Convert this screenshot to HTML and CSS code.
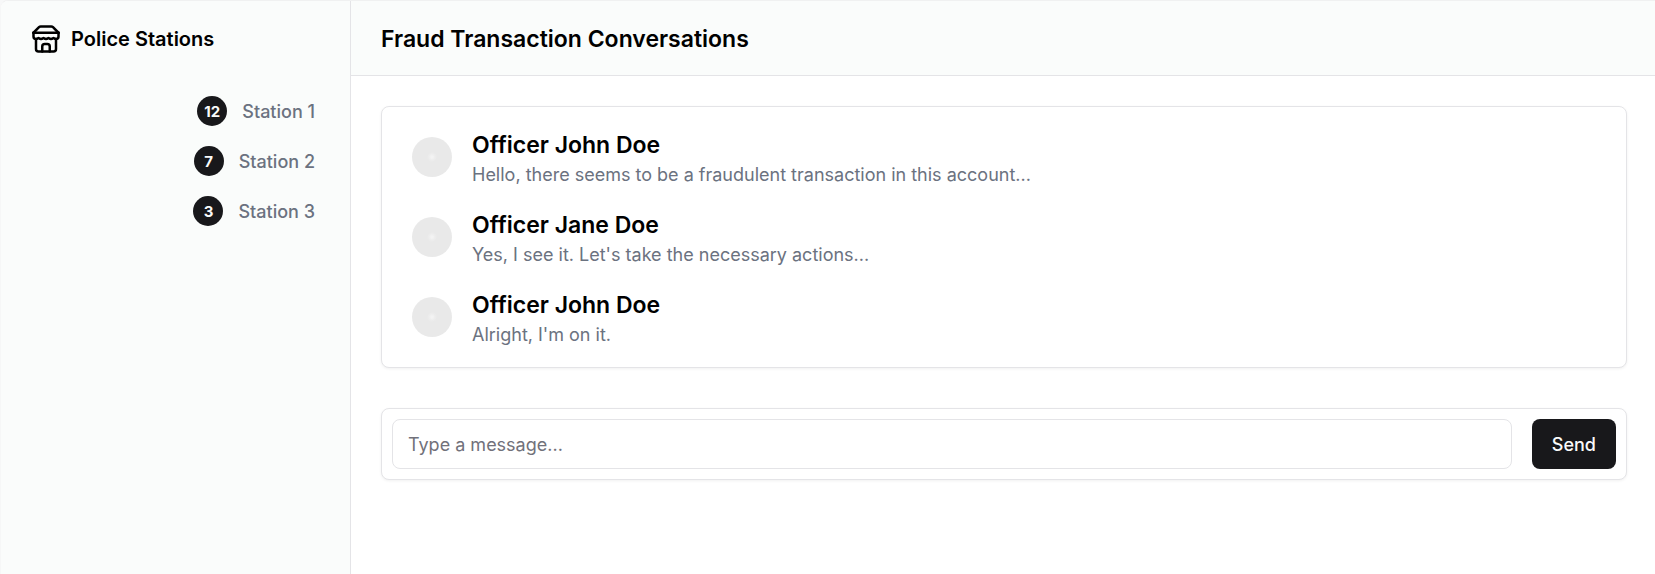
FILE: index.html
```html
<!DOCTYPE html>
<html lang="en">
<head>
<meta charset="utf-8">
<title>Fraud Transaction Conversations</title>
<link rel="stylesheet" href="styles.css">
</head>
<body>
<div class="app">
  <aside class="sidebar">
    <a class="brand" href="#">
      <svg class="brand-icon" viewBox="0 0 24 24" fill="none" stroke="currentColor" stroke-width="2" stroke-linecap="round" stroke-linejoin="round" aria-hidden="true">
        <path d="m2 7 4.41-4.41A2 2 0 0 1 7.83 2h8.34a2 2 0 0 1 1.42.59L22 7"/>
        <path d="M4 12v8a2 2 0 0 0 2 2h12a2 2 0 0 0 2-2v-8"/>
        <path d="M15 22v-4a2 2 0 0 0-2-2h-2a2 2 0 0 0-2 2v4"/>
        <path d="M2 7h20"/>
        <path d="M22 7v3a2 2 0 0 1-2 2a2.7 2.7 0 0 1-1.59-.63.7.7 0 0 0-.82 0A2.7 2.7 0 0 1 16 12a2.7 2.7 0 0 1-1.59-.63.7.7 0 0 0-.82 0A2.7 2.7 0 0 1 12 12a2.7 2.7 0 0 1-1.59-.63.7.7 0 0 0-.82 0A2.7 2.7 0 0 1 8 12a2.7 2.7 0 0 1-1.59-.63.7.7 0 0 0-.82 0A2.7 2.7 0 0 1 4 12a2 2 0 0 1-2-2V7"/>
      </svg>
      <span class="brand-name">Police Stations</span>
    </a>
    <nav class="stations">
      <a class="station" href="#"><span class="badge">12</span>Station 1</a>
      <a class="station" href="#"><span class="badge">7</span>Station 2</a>
      <a class="station" href="#"><span class="badge">3</span>Station 3</a>
    </nav>
  </aside>
  <div class="content">
    <header class="topbar">
      <h1 class="heading">Fraud Transaction Conversations</h1>
    </header>
    <main class="main">
      <section class="card messages">
        <article class="message">
          <span class="avatar"></span>
          <div>
            <h2 class="heading">Officer John Doe</h2>
            <p class="text">Hello, there seems to be a fraudulent transaction in this account...</p>
          </div>
        </article>
        <article class="message">
          <span class="avatar"></span>
          <div>
            <h2 class="heading">Officer Jane Doe</h2>
            <p class="text">Yes, I see it. Let's take the necessary actions...</p>
          </div>
        </article>
        <article class="message">
          <span class="avatar"></span>
          <div>
            <h2 class="heading">Officer John Doe</h2>
            <p class="text">Alright, I'm on it.</p>
          </div>
        </article>
      </section>
      <form class="card composer">
        <input class="field" type="text" placeholder="Type a message..." aria-label="Message">
        <button class="send" type="button">Send</button>
      </form>
    </main>
  </div>
</div>
</body>
</html>
```
FILE: styles.css
```css
* { box-sizing: border-box; }
body {
  margin: 0;
  background: #f7f8f8;
  color: #000;
  font-family: Inter, "Liberation Sans", sans-serif;
  font-size: 18px;
  line-height: 25px;
}
h1, h2, p { margin: 0; }
a { color: inherit; text-decoration: none; }
.app {
  display: grid;
  grid-template-columns: 350px 1fr;
  min-height: 100vh;
  border-top: 1px solid #f0f1f1;
  border-left: 1px solid #f6f7f7;
  border-top-left-radius: 8px;
  background: #fff;
  overflow: hidden;
}
.sidebar {
  display: flex;
  flex-direction: column;
  gap: 10px;
  background: #fafcfb;
  border-right: 1px solid #e4e4e7;
}
.brand {
  display: flex;
  align-items: center;
  gap: 10px;
  height: 75px;
  padding: 0 30px;
  font-size: 20px;
  font-weight: 600;
}
.brand-icon { width: 30px; height: 30px; }
.brand-name { padding-top: 2px; }
.stations {
  display: flex;
  flex-direction: column;
  align-items: flex-end;
  padding: 0 20px;
}
.station {
  display: flex;
  align-items: center;
  gap: 15px;
  padding: 10px 15px;
  color: #6b7280;
  font-weight: 500;
}
.badge {
  display: flex;
  align-items: center;
  justify-content: center;
  width: 30px;
  height: 30px;
  border-radius: 50%;
  background: #18181b;
  color: #fafafa;
  font-size: 15px;
  font-weight: 700;
}
.topbar {
  display: flex;
  align-items: center;
  height: 75px;
  padding: 0 30px;
  background: #fafcfb;
  border-bottom: 1px solid #e4e4e7;
}
.heading {
  padding-top: 2px;
  font-size: 23px;
  line-height: 33px;
  font-weight: 600;
}
.main {
  display: flex;
  flex-direction: column;
  gap: 40px;
  padding: 30px 28px 30px 30px;
}
.card {
  border: 1px solid #e4e4e7;
  border-radius: 8px;
  background: #fff;
  box-shadow: 0 1px 3px rgba(0, 0, 0, 0.06);
}
.messages {
  display: flex;
  flex-direction: column;
  gap: 20px;
  padding: 20px 30px;
}
.message {
  display: flex;
  align-items: center;
  gap: 20px;
}
.avatar {
  flex: none;
  width: 40px;
  height: 40px;
  border-radius: 50%;
  background: radial-gradient(circle, #f3f3f3 1px, #ededed 3px, #e9e9e9 5px);
}
.text { color: #6b7280; }
.composer {
  display: flex;
  gap: 20px;
  padding: 10px;
}
.field {
  flex: 1;
  min-width: 0;
  height: 50px;
  padding: 0 15px;
  border: 1px solid #e4e4e7;
  border-radius: 8px;
  background: #fff;
  font: inherit;
}
.field::placeholder { color: #71717a; opacity: 1; }
.send {
  padding: 0 20px;
  border: 0;
  border-radius: 8px;
  background: #18181b;
  color: #fafafa;
  font: inherit;
  font-weight: 500;
}
```
